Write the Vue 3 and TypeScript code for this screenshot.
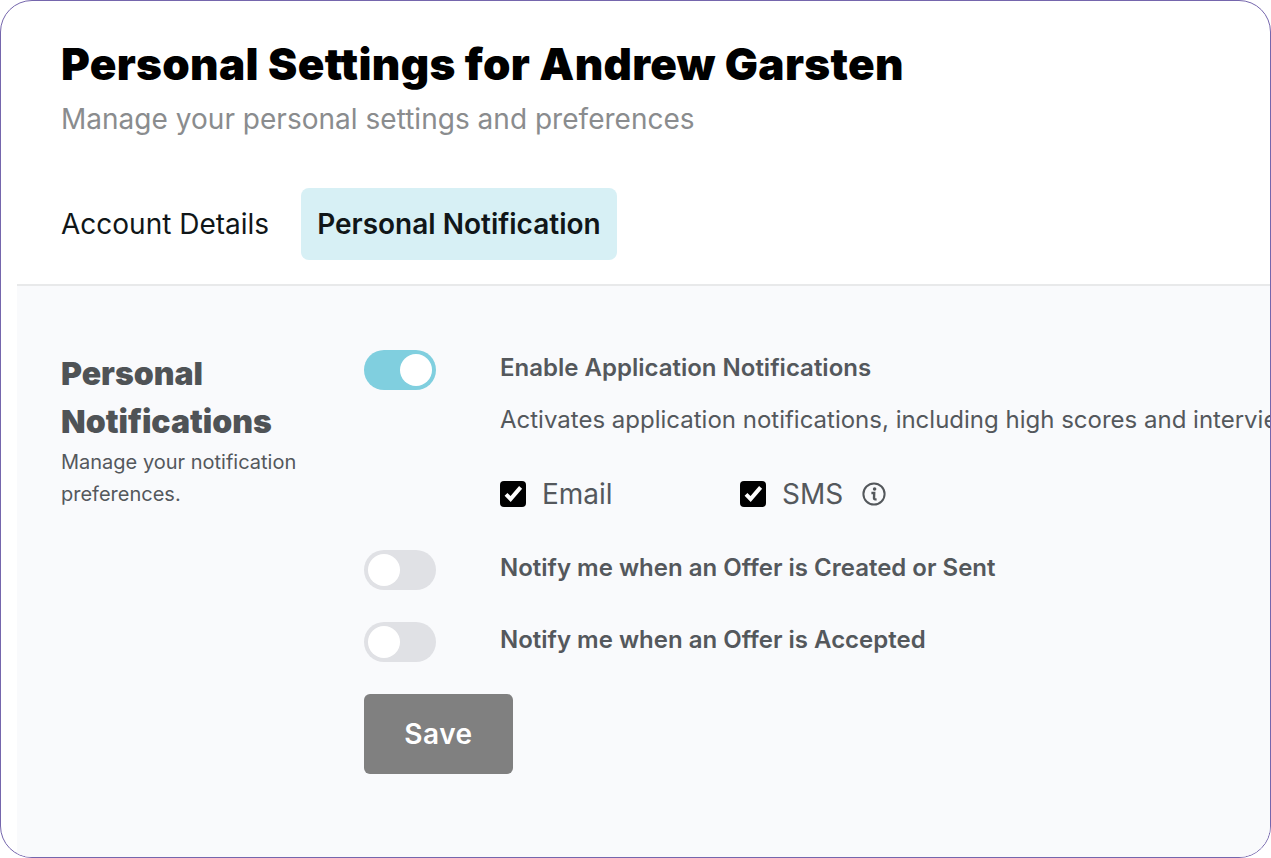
<script setup lang="ts">
interface Pref { label: string; on: boolean }
const rest: Pref[] = [
  { label: 'Notify me when an Offer is Created or Sent', on: false },
  { label: 'Notify me when an Offer is Accepted', on: false },
]
</script>

<template>
  <div class="card">
    <header class="head">
      <h1 class="title">Personal Settings for Andrew Garsten</h1>
      <p class="sub">Manage your personal settings and preferences</p>
      <nav class="tabs">
        <span class="tab">Account Details</span>
        <span class="tab active">Personal Notification</span>
      </nav>
    </header>
    <section class="panel">
      <aside class="side">
        <h2 class="side-title">Personal Notifications</h2>
        <p class="side-sub">Manage your notification preferences.</p>
      </aside>
      <div class="main">
        <div class="row first">
          <span class="toggle on"><span class="knob"></span></span>
          <div class="body">
            <div class="label">Enable Application Notifications</div>
            <div class="desc">Activates application notifications, including high scores and interview invitations for your candidates.</div>
            <div class="checks">
              <span class="check email">
                <span class="box"><svg viewBox="0 0 26 26" width="26" height="26"><path d="M6 13.4l4.6 4.6 10-11.6" fill="none" stroke="#fff" stroke-width="4"/></svg></span>
                Email
              </span>
              <span class="check">
                <span class="box"><svg viewBox="0 0 26 26" width="26" height="26"><path d="M6 13.4l4.6 4.6 10-11.6" fill="none" stroke="#fff" stroke-width="4"/></svg></span>
                SMS
              </span>
              <svg class="info" viewBox="0 0 24 24" width="24" height="24" fill="none" stroke="#54585c">
                <circle cx="12" cy="12" r="10.6" stroke-width="2"/>
                <circle cx="12.6" cy="7" r="1.8" fill="#54585c" stroke="none"/>
                <path d="M9.4 11h2.8l-.2 5.2q0 1.4 2.6 1.2" stroke-width="2.4"/>
              </svg>
            </div>
          </div>
        </div>
        <div v-for="p in rest" :key="p.label" class="row">
          <span class="toggle"><span class="knob"></span></span>
          <div class="body"><div class="label">{{ p.label }}</div></div>
        </div>
        <button class="save" type="button">Save</button>
      </div>
    </section>
  </div>
</template>

<style>
html, body { margin: 0; background: #fff; }
</style>

<style scoped>
.card {
  box-sizing: border-box;
  width: 1271px;
  height: 858px;
  border: 1px solid #7566ad;
  border-radius: 32px;
  background: #fff;
  overflow: hidden;
  padding-left: 16px;
  display: flex;
  flex-direction: column;
  font-family: Inter, "Liberation Sans", sans-serif;
}
.head { padding: 38px 0 24px 44px; height: 283px; box-sizing: border-box; }
.title {
  margin: 0;
  font-family: Inter, sans-serif;
  font-weight: 900;
  font-size: 44px;
  line-height: 50px;
  letter-spacing: 0.32px;
  color: #000;
  white-space: nowrap;
}
.sub { margin: 11px 0 0; font-size: 28px; line-height: 38px; letter-spacing: 0.02px; color: #8a8c8e; white-space: nowrap; }
.tabs { display: flex; gap: 32px; margin-top: 50px; align-items: center; }
.tab { font-size: 28px; line-height: 72px; color: #101618; }
.active { background: #d7f0f5; border-radius: 8px; padding: 0 16px; font-weight: 600; }
.panel {
  flex: 1;
  background: #f9fafc;
  border-top: 2px solid #e8e9ea;
  display: flex;
  padding: 64px 0 0 44px;
  overflow: hidden;
  min-width: 0;
}
.side { width: 303px; flex: none; }
.side-title {
  margin: 0;
  font-family: Inter, sans-serif;
  font-weight: 900;
  font-size: 32px;
  line-height: 48px;
  color: #4f5356;
}
.side-sub { margin: 0; font-size: 20px; line-height: 32px; color: #54585c; width: 250px; }
.main { flex: 1; min-width: 0; }
.row { display: flex; gap: 64px; margin-bottom: 32px; }
.toggle {
  flex: none;
  width: 72px;
  height: 40px;
  box-sizing: border-box;
  border-radius: 20px;
  background: #e0e1e5;
  padding: 4px;
  display: flex;
}
.toggle.on { background: #80cfdf; justify-content: flex-end; }
.knob { width: 32px; height: 32px; border-radius: 50%; background: #fff; }
.body { min-width: 0; flex: 1; overflow: hidden; }
.label { font-size: 24px; line-height: 36px; font-weight: 600; color: #54585c; white-space: nowrap; }
.desc { margin-top: 16px; font-size: 24px; line-height: 36px; color: #54585c; white-space: nowrap; }
.checks { display: flex; align-items: center; margin-top: 36px; margin-bottom: 4px; height: 40px; font-size: 28px; color: #54585c; }
.check { display: flex; align-items: center; gap: 16px; }
.email { width: 240px; }
.box { width: 26px; height: 26px; border-radius: 4px; background: #000; display: block; }
.box svg { display: block; }
.info { margin-left: 19px; }
.save {
  display: block;
  width: 149px;
  height: 80px;
  border: 0;
  border-radius: 6px;
  background: #808080;
  color: #fff;
  font-family: Inter, sans-serif;
  font-size: 28px;
  font-weight: 600;
  letter-spacing: 0.5px;
}
</style>
